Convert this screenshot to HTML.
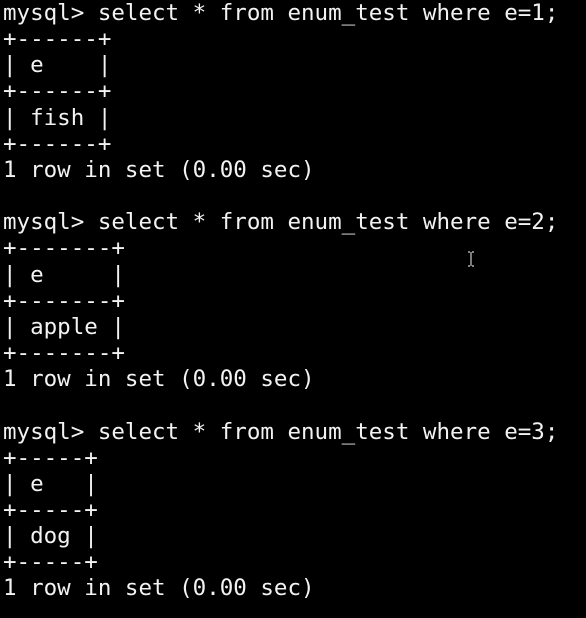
<!DOCTYPE html>
<html><head><style>
html,body{margin:0;padding:0;background:#000;width:586px;height:618px;overflow:hidden}
pre{margin:0;padding:0 0 0 3px;font-family:"DejaVu Sans Mono","Liberation Mono",monospace;font-size:22.5px;line-height:26.15px;color:#f2f2f2;position:relative;top:0px}
svg{position:absolute;left:466px;top:251px}
</style></head><body>
<pre>mysql&gt; select * from enum_test where e=1;
+------+
| e    |
+------+
| fish |
+------+
1 row in set (0.00 sec)

mysql&gt; select * from enum_test where e=2;
+-------+
| e     |
+-------+
| apple |
+-------+
1 row in set (0.00 sec)

mysql&gt; select * from enum_test where e=3;
+-----+
| e   |
+-----+
| dog |
+-----+
1 row in set (0.00 sec)</pre>
<svg width="10" height="16" viewBox="0 0 10 16"><path d="M2 1H4M6 1H8M5 1V15M2 15H4M6 15H8" stroke="#ccc" stroke-width="1.2" fill="none"/></svg>
</body></html>
